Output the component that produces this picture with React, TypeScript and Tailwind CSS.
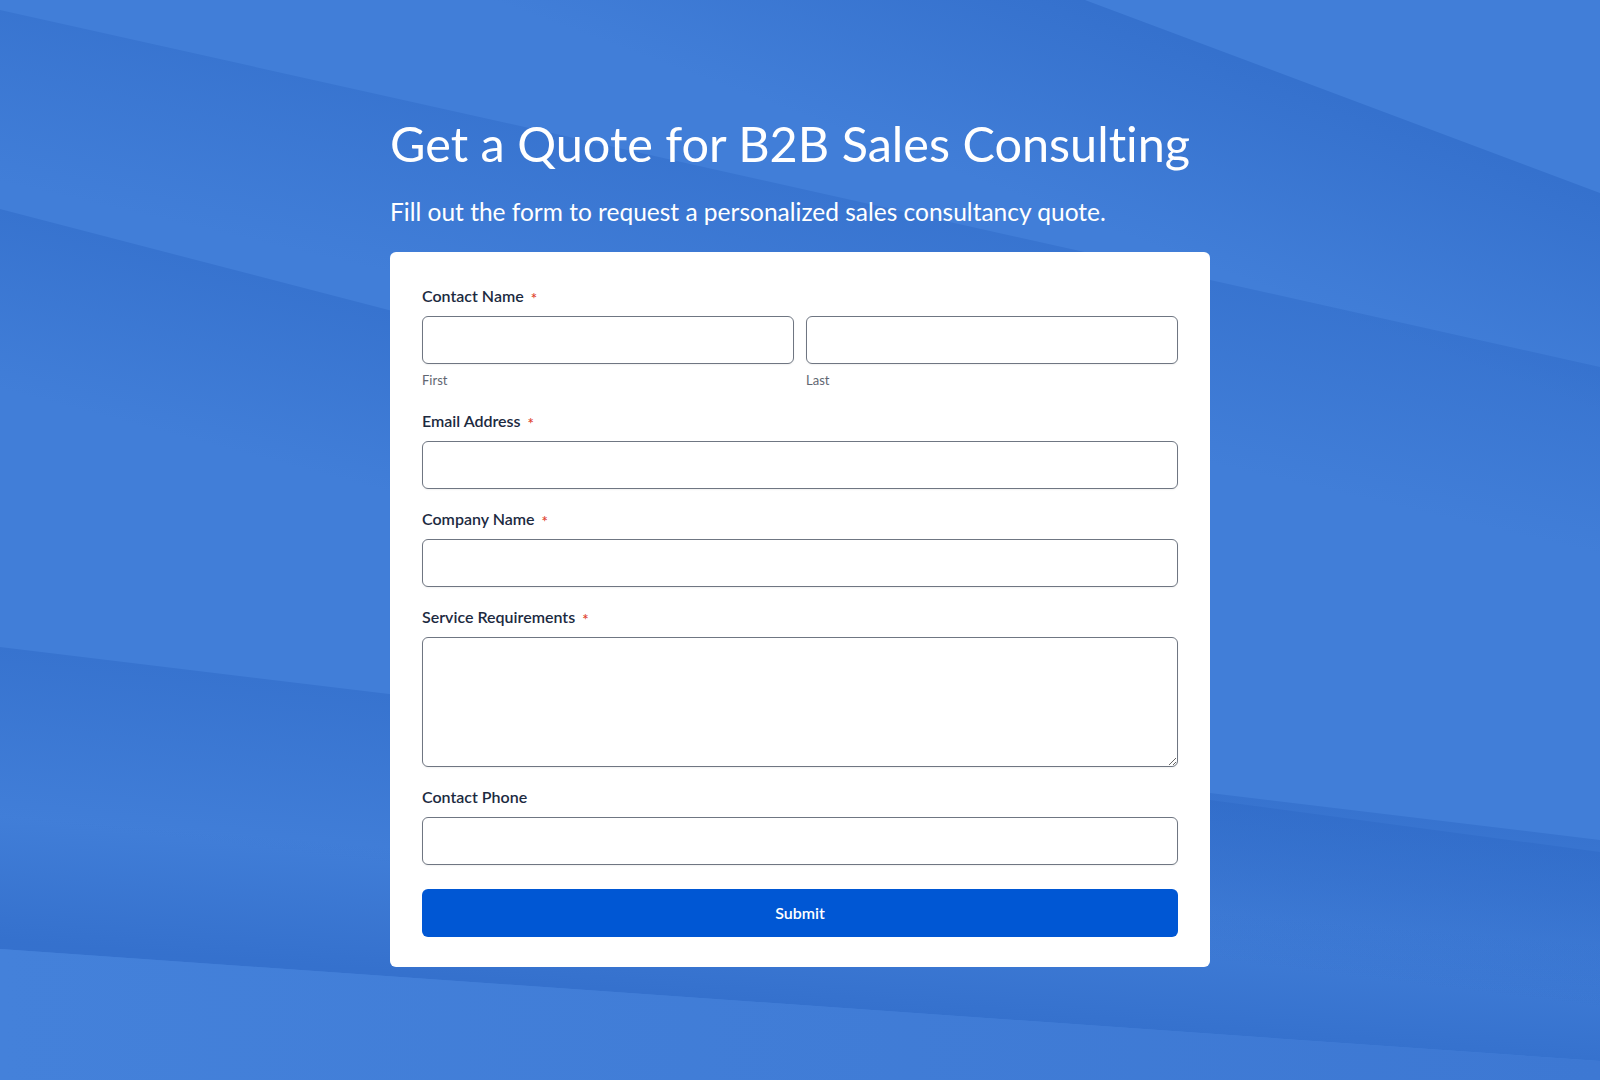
import React from 'react';

function Background() {
  const sheets = [
    { pts: '1085,0 1600,193 1600,1080 0,1080 0,0', x1: 1342, y1: 96, x2: 1270, y2: 290, op: 0.55 },
    { pts: '0,10 1600,367 1600,1080 0,1080', x1: 800, y1: 188, x2: 760, y2: 360, op: 0.4 },
    { pts: '0,209 1200,521 1200,1080 0,1080', x1: 195, y1: 260, x2: 150, y2: 430, op: 0.45 },
    { pts: '0,647 1600,840 1600,1080 0,1080', x1: 200, y1: 671, x2: 180, y2: 840, op: 0.45 },
    { pts: '1210,800 1600,852 1600,1080 1210,1080', x1: 1400, y1: 826, x2: 1380, y2: 980, op: 0.4 },
  ];

  return (
    <svg
      className="absolute inset-0 w-full h-full"
      viewBox="0 0 1600 1080"
      preserveAspectRatio="none"
    >
      <defs>
        {sheets.map((s, i) => (
          <linearGradient
            key={i}
            id={`sheet-${i}`}
            gradientUnits="userSpaceOnUse"
            x1={s.x1}
            y1={s.y1}
            x2={s.x2}
            y2={s.y2}
          >
            <stop offset="0" stopColor="#2b66c4" stopOpacity={s.op} />
            <stop offset="1" stopColor="#2b66c4" stopOpacity="0" />
          </linearGradient>
        ))}
        <linearGradient id="bottom-band" gradientUnits="userSpaceOnUse" x1="800" y1="1005" x2="810" y2="880">
          <stop offset="0" stopColor="#2b66c4" stopOpacity="0.55" />
          <stop offset="1" stopColor="#2b66c4" stopOpacity="0" />
        </linearGradient>
        <linearGradient id="bottom-light" gradientUnits="userSpaceOnUse" x1="0" y1="0" x2="1600" y2="0">
          <stop offset="0" stopColor="#4481da" />
          <stop offset="1" stopColor="#3d78d3" />
        </linearGradient>
      </defs>
      <rect width="1600" height="1080" fill="#417ed8" />
      {sheets.map((s, i) => (
        <polygon key={i} points={s.pts} fill={`url(#sheet-${i})`} />
      ))}
      <polygon points="0,760 1600,880 1600,1061 0,949" fill="url(#bottom-band)" />
      <polygon points="0,949 1600,1061 1600,1080 0,1080" fill="url(#bottom-light)" />
    </svg>
  );
}

function Label({ text, required = true }: { text: string; required?: boolean }) {
  return (
    <div className="h-6 mb-2 flex items-center text-[16px] font-semibold text-[#1c2a3f] leading-6">
      {text}
      {required && (
        <span className="relative top-[3px] ml-[7px] text-[15px] text-[#e0452f] leading-none">*</span>
      )}
    </div>
  );
}

const inputCls =
  'block w-full h-12 rounded-md border border-[#6f7682] bg-white shadow-[0_1px_2px_rgba(0,0,0,0.06)] outline-none';

export default function App() {
  return (
    <div
      className="relative min-h-screen w-full overflow-hidden flex items-center justify-center [font-variant-ligatures:none]"
      style={{ fontFamily: 'Lato, "Noto Sans", sans-serif' }}
    >
      <Background />
      <div className="relative w-[820px]">
        <h1 className="text-[48.6px] leading-[58px] font-normal text-white">
          Get a Quote for B2B Sales Consulting
        </h1>
        <p className="mt-6 text-[24.5px] leading-8 text-white">
          Fill out the form to request a personalized sales consultancy quote.
        </p>

        <form className="mt-6 bg-white rounded-md px-8 pt-8 pb-[30px]">
          <Label text="Contact Name" />
          <div className="grid grid-cols-2 gap-3">
            <div>
              <input className={inputCls} />
              <div className="mt-2 text-[13px] leading-4 text-[#5f6672]">First</div>
            </div>
            <div>
              <input className={inputCls} />
              <div className="mt-2 text-[13px] leading-4 text-[#5f6672]">Last</div>
            </div>
          </div>

          <div className="mt-[21px]">
            <Label text="Email Address" />
            <input className={inputCls} />
          </div>

          <div className="mt-[18px]">
            <Label text="Company Name" />
            <input className={inputCls} />
          </div>

          <div className="mt-[18px]">
            <Label text="Service Requirements" />
            <textarea className="block w-full h-[130px] rounded-md border border-[#6f7682] bg-white shadow-[0_1px_2px_rgba(0,0,0,0.06)] outline-none" />
          </div>

          <div className="mt-[18px]">
            <Label text="Contact Phone" required={false} />
            <input className={inputCls} />
          </div>

          <button
            type="button"
            className="mt-6 w-full h-12 rounded-md bg-[#0057d4] text-white text-[16px] font-semibold"
          >
            Submit
          </button>
        </form>
      </div>
    </div>
  );
}
